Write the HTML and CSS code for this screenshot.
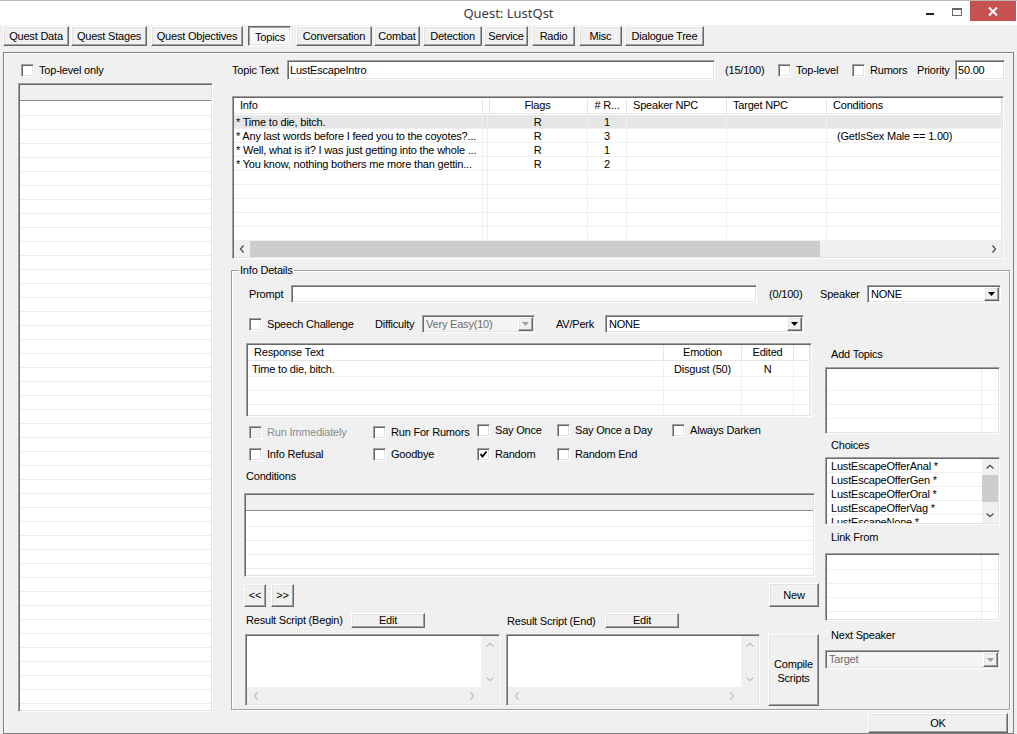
FILE: index.html
```html
<!DOCTYPE html>
<html lang="en">
<head>
<meta charset="utf-8">
<title>Quest: LustQst</title>
<link rel="stylesheet" href="styles.css">
</head>
<body>
<div class="titlebar">
  <div class="title">Quest: LustQst</div>
  <div class="winctl">
    <span class="wc-min"></span>
    <span class="wc-max"></span>
    <span class="wc-close"><svg width="10" height="9" viewBox="0 0 10 9"><path d="M1 0.5 L9 8.5 M9 0.5 L1 8.5" stroke="#fff" stroke-width="2" fill="none"/></svg></span>
  </div>
</div>

<div class="tabs">
  <div class="btn tab t1">Quest Data</div>
  <div class="btn tab t2">Quest Stages</div>
  <div class="btn tab t3">Quest Objectives</div>
  <div class="btn tab t4 on">Topics</div>
  <div class="btn tab t5">Conversation</div>
  <div class="btn tab t6">Combat</div>
  <div class="btn tab t7">Detection</div>
  <div class="btn tab t8">Service</div>
  <div class="btn tab t9">Radio</div>
  <div class="btn tab t10">Misc</div>
  <div class="btn tab t11">Dialogue Tree</div>
</div>

<div class="panel">
  <div class="leftcol">
    <label class="chk"><span class="box"></span><span>Top-level only</span></label>
    <div class="sunk topiclist">
      <div class="lhead"></div>
      <div class="lbody"></div>
    </div>
  </div>

  <div class="rightcol">
    <div class="topicrow">
      <span class="w-topic">Topic Text</span>
      <div class="sunk field w-topictext">LustEscapeIntro</div>
      <span class="w-count">(15/100)</span>
      <label class="chk w-toplevel"><span class="box"></span><span>Top-level</span></label>
      <label class="chk w-rumors"><span class="box"></span><span>Rumors</span></label>
      <span class="w-priority">Priority</span>
      <div class="sunk field w-prio">50.00</div>
    </div>

    <div class="sunk listview">
      <div class="lv-row lv-head">
        <div>Info</div><div></div><div class="c">Flags</div><div class="c"># R...</div><div>Speaker NPC</div><div>Target NPC</div><div>Conditions</div>
      </div>
      <div class="lv-body">
        <div class="lv-row sel"><div class="info">* Time to die, bitch.</div><div></div><div class="c">R</div><div class="c">1</div><div></div><div></div><div></div></div>
        <div class="lv-row"><div class="info">* Any last words before I feed you to the coyotes?...</div><div></div><div class="c">R</div><div class="c">3</div><div></div><div></div><div class="cond">(GetIsSex Male == 1.00)</div></div>
        <div class="lv-row"><div class="info">* Well, what is it? I was just getting into the whole ...</div><div></div><div class="c">R</div><div class="c">1</div><div></div><div></div><div></div></div>
        <div class="lv-row"><div class="info">* You know, nothing bothers me more than gettin...</div><div></div><div class="c">R</div><div class="c">2</div><div></div><div></div><div></div></div>
        <div class="lv-row"><div></div><div></div><div></div><div></div><div></div><div></div><div></div></div>
        <div class="lv-row"><div></div><div></div><div></div><div></div><div></div><div></div><div></div></div>
        <div class="lv-row"><div></div><div></div><div></div><div></div><div></div><div></div><div></div></div>
        <div class="lv-row"><div></div><div></div><div></div><div></div><div></div><div></div><div></div></div>
        <div class="lv-row"><div></div><div></div><div></div><div></div><div></div><div></div><div></div></div>
      </div>
      <div class="hscroll">
        <span class="arr"><svg width="6" height="8" viewBox="0 0 6 8"><path d="M4.5 0.5 L1.5 4 L4.5 7.5" fill="none" stroke="#555" stroke-width="1.4"/></svg></span>
        <span class="thumb"></span>
        <span class="track"></span>
        <span class="arr"><svg width="6" height="8" viewBox="0 0 6 8"><path d="M1.5 0.5 L4.5 4 L1.5 7.5" fill="none" stroke="#555" stroke-width="1.4"/></svg></span>
      </div>
    </div>

    <div class="group">
      <div class="legend">Info Details</div>
      <div class="promptrow">
        <span class="w-prompt">Prompt</span>
        <div class="sunk field w-promptin"></div>
        <span class="w-pcount">(0/100)</span>
        <span class="w-speaker">Speaker</span>
        <div class="sunk combo w-spkcombo"><span class="val">NONE</span><span class="btn dd"><svg width="7" height="4" viewBox="0 0 7 4"><path d="M0 0 H7 L3.5 4 Z" fill="#000"/></svg></span></div>
      </div>

      <div class="gbody">
        <div class="gleft">
          <div class="speechrow">
            <label class="chk w-speech"><span class="box"></span><span>Speech Challenge</span></label>
            <span class="w-diff">Difficulty</span>
            <div class="sunk combo dis w-diffcombo"><span class="val">Very Easy(10)</span><span class="btn dd"><svg width="7" height="4" viewBox="0 0 7 4"><path d="M0 0 H7 L3.5 4 Z" fill="#a0a0a0"/></svg></span></div>
            <span class="w-av">AV/Perk</span>
            <div class="sunk combo w-avcombo"><span class="val">NONE</span><span class="btn dd"><svg width="7" height="4" viewBox="0 0 7 4"><path d="M0 0 H7 L3.5 4 Z" fill="#000"/></svg></span></div>
          </div>

          <div class="sunk resplist">
            <div class="rl-row rl-head"><div>Response Text</div><div class="c">Emotion</div><div class="c">Edited</div><div></div></div>
            <div class="rl-body">
              <div class="rl-row"><div class="rtext">Time to die, bitch.</div><div class="c">Disgust (50)</div><div class="c">N</div><div></div></div>
              <div class="rl-row"><div></div><div></div><div></div><div></div></div>
              <div class="rl-row"><div></div><div></div><div></div><div></div></div>
              <div class="rl-row"><div></div><div></div><div></div><div></div></div>
            </div>
          </div>

          <div class="chkrow">
            <label class="chk disabled"><span class="box"></span><span>Run Immediately</span></label>
            <label class="chk"><span class="box"></span><span>Run For Rumors</span></label>
            <label class="chk up"><span class="box"></span><span>Say Once</span></label>
            <label class="chk up"><span class="box"></span><span>Say Once a Day</span></label>
            <label class="chk up"><span class="box"></span><span>Always Darken</span></label>
          </div>
          <div class="chkrow">
            <label class="chk"><span class="box"></span><span>Info Refusal</span></label>
            <label class="chk"><span class="box"></span><span>Goodbye</span></label>
            <label class="chk"><span class="box"><svg width="9" height="9" viewBox="0 0 9 9"><path d="M1.5 4 L3.5 6.5 L7.5 1.5" fill="none" stroke="#000" stroke-width="1.8"/></svg></span><span>Random</span></label>
            <label class="chk"><span class="box"></span><span>Random End</span></label>
          </div>

          <div class="condlabel">Conditions</div>
          <div class="sunk condlist">
            <div class="lhead"></div>
            <div class="lbody cbody"></div>
          </div>

          <div class="navrow">
            <div class="btn nav">&lt;&lt;</div>
            <div class="btn nav nav2">&gt;&gt;</div>
            <div class="btn newbtn">New</div>
          </div>

          <div class="resultrow">
            <span class="w-rb">Result Script (Begin)</span>
            <div class="btn editbtn">Edit</div>
            <span class="w-re">Result Script (End)</span>
            <div class="btn editbtn">Edit</div>
          </div>

          <div class="scriptrow">
            <div class="sunk script s1">
              <div class="s-text"></div>
              <div class="s-v"><svg width="8" height="6" viewBox="0 0 8 6"><path d="M0.5 4.5 L4 1.5 L7.5 4.5" fill="none" stroke="#c4c4c4" stroke-width="1.4"/></svg><svg width="8" height="6" viewBox="0 0 8 6"><path d="M0.5 1.5 L4 4.5 L7.5 1.5" fill="none" stroke="#c4c4c4" stroke-width="1.4"/></svg></div>
              <div class="s-h"><svg width="6" height="8" viewBox="0 0 6 8"><path d="M4.5 0.5 L1.5 4 L4.5 7.5" fill="none" stroke="#c4c4c4" stroke-width="1.4"/></svg><svg width="6" height="8" viewBox="0 0 6 8"><path d="M1.5 0.5 L4.5 4 L1.5 7.5" fill="none" stroke="#c4c4c4" stroke-width="1.4"/></svg></div>
              <div class="s-corner"></div>
            </div>
            <div class="sunk script s2">
              <div class="s-text"></div>
              <div class="s-v"><svg width="8" height="6" viewBox="0 0 8 6"><path d="M0.5 4.5 L4 1.5 L7.5 4.5" fill="none" stroke="#c4c4c4" stroke-width="1.4"/></svg><svg width="8" height="6" viewBox="0 0 8 6"><path d="M0.5 1.5 L4 4.5 L7.5 1.5" fill="none" stroke="#c4c4c4" stroke-width="1.4"/></svg></div>
              <div class="s-h"><svg width="6" height="8" viewBox="0 0 6 8"><path d="M4.5 0.5 L1.5 4 L4.5 7.5" fill="none" stroke="#c4c4c4" stroke-width="1.4"/></svg><svg width="6" height="8" viewBox="0 0 6 8"><path d="M1.5 0.5 L4.5 4 L1.5 7.5" fill="none" stroke="#c4c4c4" stroke-width="1.4"/></svg></div>
              <div class="s-corner"></div>
            </div>
            <div class="btn compile">Compile<br>Scripts</div>
          </div>
        </div>

        <div class="gright">
          <div class="rlabel r-add">Add Topics</div>
          <div class="sunk gridbox addbox"></div>
          <div class="rlabel r-choices">Choices</div>
          <div class="sunk choices">
            <div class="items">
              <div>LustEscapeOfferAnal *</div>
              <div>LustEscapeOfferGen *</div>
              <div>LustEscapeOfferOral *</div>
              <div>LustEscapeOfferVag *</div>
              <div>LustEscapeNone *</div>
            </div>
            <div class="vscroll">
              <span class="arr"><svg width="8" height="6" viewBox="0 0 8 6"><path d="M0.5 4.5 L4 1.5 L7.5 4.5" fill="none" stroke="#555" stroke-width="1.4"/></svg></span>
              <span class="vthumb"></span>
              <span class="vtrack"></span>
              <span class="arr"><svg width="8" height="6" viewBox="0 0 8 6"><path d="M0.5 1.5 L4 4.5 L7.5 1.5" fill="none" stroke="#555" stroke-width="1.4"/></svg></span>
            </div>
          </div>
          <div class="rlabel r-link">Link From</div>
          <div class="sunk gridbox linkbox"></div>
          <div class="rlabel r-next">Next Speaker</div>
          <div class="sunk combo dis nextcombo"><span class="val">Target</span><span class="btn dd"><svg width="7" height="4" viewBox="0 0 7 4"><path d="M0 0 H7 L3.5 4 Z" fill="#a0a0a0"/></svg></span></div>
        </div>
      </div>
    </div>

    <div class="okrow"><div class="btn okbtn">OK</div></div>
  </div>
</div>
</body>
</html>
```

FILE: styles.css
```css
* { box-sizing: border-box; }
html, body { margin: 0; }
body {
  width: 1017px;
  height: 734px;
  overflow: hidden;
  background: #f0f0f0;
  font: 11px/13px "Liberation Sans", Arial, sans-serif;
  letter-spacing: -0.2px;
  color: #000;
}

/* ---------- title bar ---------- */
.titlebar {
  height: 25px;
  background: #fff;
  border-top: 1px solid #b9b9b9;
  display: grid;
  grid-template-columns: 1fr auto 1fr;
}
.title {
  grid-column: 2;
  font: 13px/24px "Noto Sans", "Liberation Sans", sans-serif;
  letter-spacing: 0;
  color: #3a3a3a;
}
.winctl { grid-column: 3; justify-self: end; display: flex; align-items: flex-start; }
.wc-min { width: 8px; height: 2px; background: #222; margin: 12px 18px 0 0; }
.wc-max { width: 10px; height: 8px; border: 1px solid #666; border-top-width: 2px; margin: 7px 8px 0 0; }
.wc-close {
  width: 46px; height: 20px; margin-right: 1px;
  background: #c75050;
  display: flex; align-items: center; justify-content: center;
}

/* ---------- generic controls ---------- */
.btn {
  background: #f0f0f0;
  border: 1px solid;
  border-color: #fff #696969 #696969 #fff;
  box-shadow: inset -1px -1px 0 #a0a0a0, inset 1px 1px 0 #e3e3e3;
  display: flex; align-items: center; justify-content: center;
  text-align: center;
  white-space: nowrap;
}
.sunk {
  background: #fff;
  border: 1px solid;
  border-color: #a0a0a0 #fff #fff #a0a0a0;
  padding: 1px;
  box-shadow: inset 1px 1px 0 #696969, inset -1px -1px 0 #e3e3e3;
}
.field { display: flex; align-items: center; padding: 1px 2px; white-space: nowrap; }

.chk { display: flex; align-items: center; gap: 5px; height: 13px; white-space: nowrap; }
.box {
  width: 13px; height: 13px; flex: none;
  background: #fff;
  border: 1px solid;
  border-color: #a0a0a0 #fff #fff #a0a0a0;
  box-shadow: inset 1px 1px 0 #696969, inset -1px -1px 0 #e3e3e3;
  display: flex; align-items: center; justify-content: center;
}
.chk.disabled { color: #8d8d8d; }
.chk.disabled .box { background: #f0f0f0; }
.chk.up { margin-top: -2px; }

.combo { display: flex; align-items: stretch; padding: 1px 1px 1px 3px; }
.combo .val { flex: 1; display: flex; align-items: center; white-space: nowrap; overflow: hidden; }
.combo .dd { width: 15px; flex: none; }
.combo.dis { background: #f4f4f4; color: #6d6d6d; }

/* ---------- tabs ---------- */
.tabs { display: flex; height: 20px; margin-top: 1px; }
.tab.on {
  border-color: #696969 #fff #fff #696969;
  box-shadow: inset 1px 1px 0 #a0a0a0, inset -1px -1px 0 #e3e3e3;
  background: #f8f8f8;
  padding: 2px 0 0 1px;
}
.t1 { margin-left: 3px; width: 66px; }
.t2 { margin-left: 2px; width: 76px; }
.t3 { margin-left: 4px; width: 92px; }
.t4 { margin-left: 5px; width: 43px; }
.t5 { margin-left: 5px; width: 76px; }
.t6 { margin-left: 2px; width: 46px; }
.t7 { margin-left: 3px; width: 59px; }
.t8 { margin-left: 2px; width: 44px; }
.t9 { margin-left: 4px; width: 43px; }
.t10 { margin-left: 4px; width: 43px; }
.t11 { margin-left: 3px; width: 79px; }

/* ---------- main panel ---------- */
.panel {
  margin: 6px 0 0 3px;
  width: 1011px;
  height: 682px;
  border: 1px solid #7f7f7f;
  box-shadow: inset 1px 1px 0 #fff;
  display: flex;
}
.leftcol { width: 227px; flex: none; padding: 11px 0 0 17px; display: flex; flex-direction: column; }
.topiclist { margin: 6px 0 0 -3px; width: 195px; height: 629px; display: flex; flex-direction: column; }
.lhead { height: 16px; flex: none; background: #f0f0f0; border-bottom: 1px solid #8a8a8a; }
.lbody {
  flex: 1;
  background: repeating-linear-gradient(to bottom, #fff 0 13px, #ececec 13px 14px);
  background-position: 0 1px;
}

.rightcol { flex: 1; padding-top: 7px; display: flex; flex-direction: column; }

/* topic row */
.topicrow { display: flex; align-items: center; height: 20px; }
.w-topic { margin-left: 1px; width: 55px; flex: none; }
.w-topictext { width: 428px; height: 20px; }
.w-count { margin-left: 10px; width: 53px; flex: none; }
.w-toplevel { width: 74px; flex: none; }
.w-rumors { width: 65px; flex: none; }
.w-priority { width: 38px; flex: none; }
.w-prio { width: 50px; height: 20px; }

/* list view */
.listview {
  margin: 16px 0 0 1px;
  width: 772px;
  height: 163px;
  display: flex;
  flex-direction: column;
  overflow: hidden;
}
.lv-row {
  display: grid;
  grid-template-columns: 249px 5px 100px 39px 100px 100px 175px;
  height: 14px;
}
.lv-head { height: 16px; flex: none; border-bottom: 1px solid #e5e5e5; }
.lv-head > div { border-right: 1px solid #e5e5e5; padding-left: 6px; line-height: 15px; white-space: nowrap; overflow: hidden; }
.lv-body { flex: 1; overflow: hidden; padding-top: 1px; }
.lv-body .lv-row > div {
  border-right: 1px solid #f0f0f0;
  border-bottom: 1px solid #f0f0f0;
  line-height: 14px;
  white-space: nowrap;
  overflow: hidden;
}
.lv-row .c { text-align: center; padding-left: 0; }
.lv-row.sel { background: #e6e6e6; }
.lv-body .info { padding-left: 2px; }
.lv-body .cond { padding-left: 10px; }

.hscroll { height: 16px; flex: none; display: flex; background: #f0f0f0; }
.arr { width: 16px; flex: none; display: flex; align-items: center; justify-content: center; }
.hscroll .thumb { width: 570px; background: #cdcdcd; }
.hscroll .track { flex: 1; }

/* group */
.group {
  margin-top: 11px;
  width: 779px;
  height: 440px;
  border: 1px solid #a0a0a0;
  box-shadow: inset 1px 1px 0 #fff, 1px 1px 0 #fff;
}
.legend {
  margin: -7px 0 0 7px;
  padding: 0 1px;
  width: max-content;
  height: 13px;
  background: #f0f0f0;
}
.promptrow { margin-top: 8px; display: flex; align-items: center; height: 18px; padding-left: 17px; }
.w-prompt { width: 42px; flex: none; }
.w-promptin { width: 466px; height: 18px; }
.w-pcount { margin-left: 12px; width: 38px; flex: none; }
.w-speaker { margin-left: 13px; width: 47px; flex: none; }
.w-spkcombo { width: 134px; height: 18px; }

.gbody { display: flex; margin-top: 12px; padding-left: 12px; }
.gleft { width: 575px; flex: none; display: flex; flex-direction: column; }
.gright { width: 175px; flex: none; margin-left: 6px; display: flex; flex-direction: column; }

.speechrow { display: flex; align-items: center; height: 18px; padding-left: 5px; }
.w-speech { width: 126px; flex: none; }
.w-diff { width: 47px; flex: none; }
.w-diffcombo { width: 113px; height: 18px; }
.w-av { margin-left: 21px; width: 49px; flex: none; }
.w-avcombo { width: 199px; height: 18px; }

/* response list */
.resplist { margin: 10px 0 0 2px; width: 566px; height: 74px; display: flex; flex-direction: column; overflow: hidden; }
.rl-row { display: grid; grid-template-columns: 416px 78px 52px 1fr; height: 14px; }
.rl-head { height: 16px; flex: none; border-bottom: 1px solid #e5e5e5; }
.rl-head > div { border-right: 1px solid #e5e5e5; padding-left: 6px; line-height: 15px; }
.rl-head > .c, .rl-row > .c { padding-left: 0; text-align: center; }
.rl-body { flex: 1; overflow: hidden; padding-top: 1px; }
.rl-body .rl-row > div { border-right: 1px solid #f0f0f0; border-bottom: 1px solid #f0f0f0; line-height: 14px; white-space: nowrap; }
.rl-body .rl-row:first-child { height: 15px; }
.rl-body .rtext { padding-left: 4px; }

.chkrow {
  display: grid;
  grid-template-columns: 124px 104px 80px 115px auto;
  padding-left: 5px;
  height: 13px;
  margin-top: 9px;
}

.condlabel { margin-top: 9px; padding-left: 2px; height: 13px; }
.condlist { margin-top: 10px; width: 571px; height: 84px; display: flex; flex-direction: column; }
.cbody { background-position: 0 2px; }

.navrow { display: flex; align-items: flex-end; margin-top: 6px; height: 24px; }
.nav { width: 22px; height: 23px; }
.nav2 { margin-left: 5px; width: 23px; }
.newbtn { margin-left: auto; width: 50px; height: 24px; }

.resultrow { display: flex; align-items: center; margin-top: 6px; height: 15px; }
.w-rb { margin-left: 2px; width: 105px; flex: none; }
.w-re { margin-left: 82px; width: 98px; flex: none; padding-top: 2px; }
.editbtn { width: 74px; height: 15px; }

.scriptrow { display: flex; margin-top: 6px; height: 72px; }
.script {
  display: grid;
  grid-template-columns: 1fr 17px;
  grid-template-rows: 1fr 17px;
}
.s1 { margin-left: 1px; width: 255px; }
.s2 { margin-left: 6px; width: 254px; }
.s-text { background: #fff; }
.s-v { background: #f0f0f0; display: flex; flex-direction: column; align-items: center; justify-content: space-between; padding: 6px 0 5px; }
.s-h { background: #f0f0f0; display: flex; align-items: center; justify-content: space-between; padding: 0 6px; }
.s-corner { background: #f0f0f0; }
.compile { margin-left: 8px; width: 51px; height: 72px; line-height: 14px; white-space: normal; padding-top: 1px; }

/* right column */
.rlabel { padding-left: 6px; height: 13px; white-space: nowrap; }
.r-add { margin-top: 33px; }
.gridbox {
  background:
    linear-gradient(to right, transparent 155px, #ececec 155px 156px, transparent 156px),
    repeating-linear-gradient(to bottom, #fff 0 13px, #f0f0f0 13px 14px);
  background-position: 0 0, 0 9px;
}
.addbox { margin-top: 6px; height: 67px; }
.r-choices { margin-top: 5px; }
.choices { margin-top: 5px; height: 68px; display: flex; overflow: hidden; }
.items { flex: 1; overflow: hidden; }
.items > div { height: 14px; line-height: 14px; padding-left: 4px; border-bottom: 1px solid #f0f0f0; white-space: nowrap; }
.vscroll { width: 16px; flex: none; background: #f0f0f0; display: flex; flex-direction: column; }
.vscroll .arr { width: 16px; height: 16px; }
.vthumb { height: 27px; background: #cdcdcd; }
.vtrack { flex: 1; }
.r-link { margin-top: 6px; }
.linkbox { margin-top: 9px; height: 68px; background-position: 0 0, 0 2px; }
.r-next { margin-top: 8px; }
.nextcombo { margin-top: 8px; height: 19px; width: 175px; }

/* ok */
.okrow { display: flex; justify-content: flex-end; margin-top: 3px; padding-right: 5px; }
.okbtn { width: 140px; height: 20px; }
```
